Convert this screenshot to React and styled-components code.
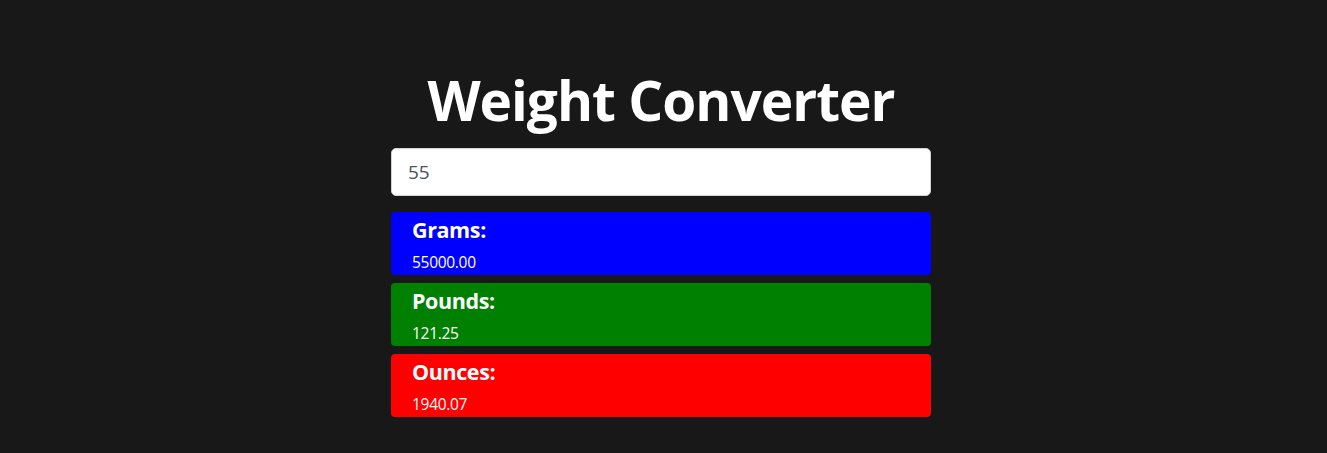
import styled, { createGlobalStyle } from "styled-components";

const GlobalStyle = createGlobalStyle`
    body {
        margin: 0;
        background-color: #181818;
        font-family: "Open Sans", "Noto Sans", sans-serif;
    }
`;

const Page = styled.div`
    min-height: 453px;
    display: flex;
    flex-direction: column;
    align-items: center;
    padding: 66px 5px 0 0;
    box-sizing: border-box;
`;

const Wrapper = styled.div`
    width: 540px;
    display: flex;
    flex-direction: column;
`;

const Title = styled.h1`
    margin: 0 0 14px;
    color: #fff;
    text-align: center;
    font-size: 55px;
    font-weight: 700;
    line-height: 68px;
    letter-spacing: -1px;
`;

const Input = styled.input`
    box-sizing: border-box;
    width: 100%;
    height: 48px;
    padding: 0 16px;
    font-family: inherit;
    font-size: 19px;
    color: #495057;
    background: #fff;
    border: 1px solid #ced4da;
    border-radius: 5px;
    outline: none;
    margin-bottom: 16px;
`;

const Results = styled.div`
    display: flex;
    flex-direction: column;
    gap: 8px;
`;

const Card = styled.div`
    box-sizing: border-box;
    height: 63px;
    padding: 3px 21px 0;
    border-radius: 4px;
    background-color: ${props => props.color};
    color: #fff;
`;

const Label = styled.h4`
    margin: 0;
    font-size: 21.5px;
    font-weight: 700;
    line-height: 30px;
    letter-spacing: -0.4px;
`;

const Value = styled.div`
    margin-top: 7px;
    font-size: 15.5px;
    line-height: 20px;
    letter-spacing: -0.3px;
`;

const units = [
    { name: "Grams", color: "#0000ff", value: "55000.00" },
    { name: "Pounds", color: "#008000", value: "121.25" },
    { name: "Ounces", color: "#ff0000", value: "1940.07" },
];

const App = () => {
    return (
        <>
            <GlobalStyle />
            <Page>
                <Wrapper>
                    <Title>Weight Converter</Title>
                    <Input defaultValue="55" />
                    <Results>
                        {units.map(u => (
                            <Card key={u.name} color={u.color}>
                                <Label>{u.name}:</Label>
                                <Value>{u.value}</Value>
                            </Card>
                        ))}
                    </Results>
                </Wrapper>
            </Page>
        </>
    );
};

export default App;
